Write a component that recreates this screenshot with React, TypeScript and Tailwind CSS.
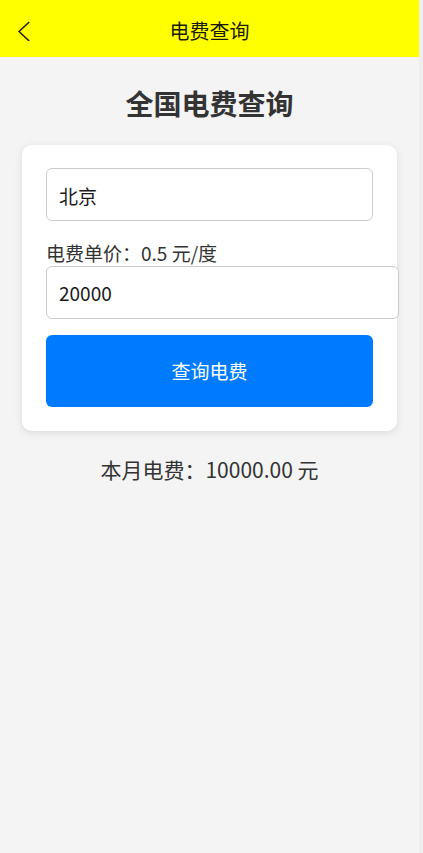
import { useState } from 'react'

const regions = [
  { name: '北京', price: 0.5 },
  { name: '上海', price: 0.6 },
  { name: '广州', price: 0.65 },
]

function Header({ title }: { title: string }) {
  return (
    <header className="grid h-[57px] grid-cols-[48px_1fr_48px] items-center bg-[#ffff00] pt-1">
      <button type="button" aria-label="返回" className="flex h-12 items-center pl-[18px]">
        <svg className="h-5 w-3" fill="none" viewBox="0 0 12 20" stroke="#1a1a00" strokeWidth="1.5">
          <path d="M11.2 1L1 10.5L11.2 20" />
        </svg>
      </button>
      <div className="text-center text-[20px] leading-7 text-[#1a1a00]">{title}</div>
    </header>
  )
}

export default function App() {
  const [region, setRegion] = useState('北京')
  const [usage, setUsage] = useState('20000')
  const [total, setTotal] = useState(10000)

  const price = regions.find((r) => r.name === region)?.price ?? 0

  return (
    <div className="min-h-screen bg-[#eeeeee] pr-1 font-['Noto_Sans_CJK_SC',sans-serif] text-[#333333]">
      <div className="min-h-screen bg-[#f4f4f4]">
        <Header title="电费查询" />

        <main className="px-[22px] pt-[26px]">
          <h1 className="text-center text-[28px] leading-10 font-bold">全国电费查询</h1>

          <form
            className="mt-[22px] rounded-[10px] bg-white p-6 pt-[23px] shadow-[0_2px_8px_rgba(0,0,0,0.1)]"
            onSubmit={(e) => {
              e.preventDefault()
              setTotal(Number(usage) * price)
            }}
          >
            <select
              aria-label="地区"
              value={region}
              onChange={(e) => setRegion(e.target.value)}
              className="block h-[53px] w-full appearance-none rounded-md border border-[#cccccc] bg-white px-3 pt-1 text-[19px] text-[#1a1a1a]"
            >
              {regions.map((r) => (
                <option key={r.name} value={r.name}>
                  {r.name}
                </option>
              ))}
            </select>

            <label htmlFor="usage" className="mt-[19px] block text-[19px] leading-[26px]">
              电费单价：{price} 元/度
            </label>
            <input
              id="usage"
              type="text"
              inputMode="numeric"
              value={usage}
              onChange={(e) => setUsage(e.target.value)}
              className="block h-[53px] w-[calc(100%+26px)] rounded-md border border-[#cccccc] bg-white px-3 text-[19px] text-[#1a1a1a]"
            />

            <button
              type="submit"
              className="mt-4 block h-[72px] w-full rounded-md bg-[#007bff] pt-px text-[19px] text-white"
            >
              查询电费
            </button>
          </form>

          <p className="mt-[22px] text-center text-[21px] leading-8">本月电费：{total.toFixed(2)} 元</p>
        </main>
      </div>
    </div>
  )
}
